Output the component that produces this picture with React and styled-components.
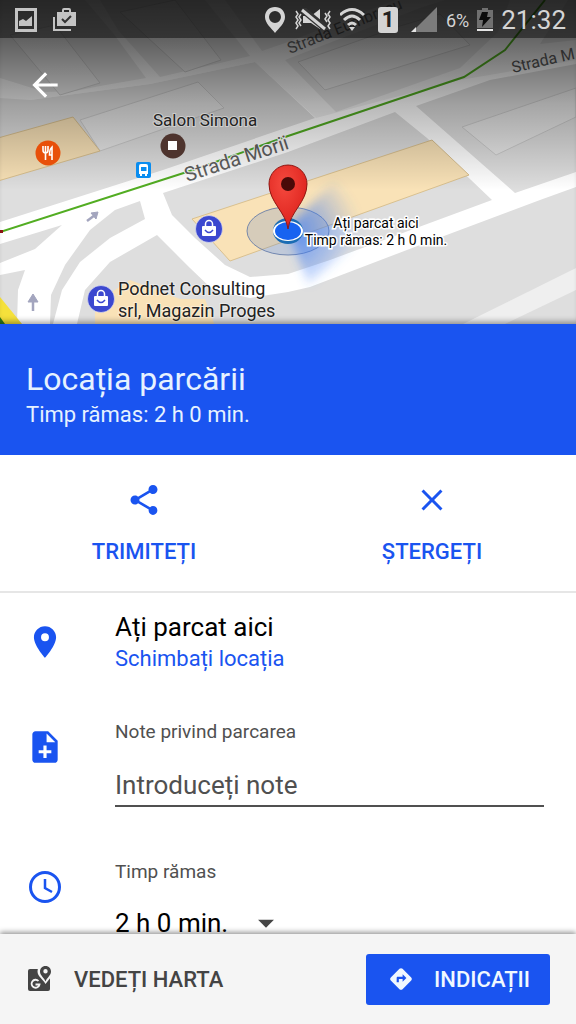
import React from "react";
import styled, { createGlobalStyle } from "styled-components";
import {
  MdArrowBack,
  MdShare,
  MdClose,
  MdPlace,
  MdNoteAdd,
  MdDirections,
  MdArrowDropDown,
} from "react-icons/md";

const BLUE = "#1a54f0";

const blocks = [
  "0,0 85,0 113,33 146,78 100,86 75,91 45,92 0,78",
  "100,0 205,0 250,56 160,77 118,30",
  "225,0 395,0 288,42 262,51",
  "285,60 420,8 445,0 510,0 498,32 460,68 336,112",
  "0,98 30,100 150,84 255,62 315,118 163,170 0,222",
  "416,106 490,80 576,64 576,172 515,193",
  "540,44 568,0 576,0 576,40",
  "163,193 288,152 395,112 427,138 492,200 400,234 330,260 288,274 250,277 225,265 195,238 172,215",
  "0,244 62,225 35,249 0,263",
  "0,275 25,270 18,290 17,324 0,324",
  "140,201 145,219 110,238 80,262 62,290 53,324 50,324 51,295 65,265 90,230 115,210",
  "157,235 190,268 213,290 250,298 288,292 310,287 420,245 540,200 576,187 576,324 77,324 85,290 110,262",
];

const buildings = [
  "10,35 55,25 100,83 60,95",
  "120,12 175,0 221,60 185,72",
  "298,62 400,26 440,14 470,45 325,90",
  "462,127 576,88 576,117 496,155",
  "80,120 198,82 224,108 100,151",
];

const MapDrawing = () => (
  <MapSvg viewBox="0 0 576 324" preserveAspectRatio="xMidYMax slice" aria-hidden="true">
    <defs>
      <radialGradient id="beam" gradientUnits="userSpaceOnUse" cx="288" cy="232" r="72">
        <stop offset="0" stopColor="#3f7df5" stopOpacity="0.8" />
        <stop offset="1" stopColor="#3f7df5" stopOpacity="0" />
      </radialGradient>
      <filter id="soft">
        <feGaussianBlur stdDeviation="5" />
      </filter>
      <linearGradient id="scrim" x1="0" y1="0" x2="0" y2="1">
        <stop offset="0" stopColor="#000" stopOpacity="0.68" />
        <stop offset="0.2" stopColor="#000" stopOpacity="0.58" />
        <stop offset="0.55" stopColor="#000" stopOpacity="0.28" />
        <stop offset="1" stopColor="#000" stopOpacity="0" />
      </linearGradient>
      <radialGradient id="pin" cx="0.4" cy="0.3" r="0.8">
        <stop offset="0" stopColor="#f5493e" />
        <stop offset="1" stopColor="#d91c17" />
      </radialGradient>
    </defs>
    <rect width="576" height="324" fill="#fff" />
    <path d="M0 0H576V60L460 80L316 118L255 62L150 84L30 100H0Z" fill="#f0f0f0" />
    {blocks.map((p) => (
      <polygon key={p} points={p} fill="#dedede" />
    ))}
    {buildings.map((p) => (
      <polygon key={p} points={p} fill="#e6e6e6" stroke="#cacaca" />
    ))}
    <polygon points="463,324 576,268 576,290 505,324" fill="#efefef" />
    <g fill="#f9e2b7" stroke="#d9c08f">
      <polygon points="-2,138 73,117 100,151 -2,181" />
      <polygon points="192,219 432,140 469,175 230,261" />
      <polygon points="95,326 95,303 130,280 180,299 205,299 215,326" stroke="none" />
    </g>
    <path d="M0 297L22 324H0Z" fill="#f5e13b" />
    <path d="M0 317L5 324H0Z" fill="#2f7d1c" />
    <path d="M0 232L193 170L288 136L464 77L505 50L545 0" fill="none" stroke="#52ad22" strokeWidth="2" />
    <rect y="230" width="3" height="3" fill="#8e1515" />
    <g fill="#a3a5be" stroke="#a3a5be" strokeWidth="2.5">
      <path d="M87 221L95 215" />
      <path d="M91 213L98 212L96 219Z" strokeWidth="1" />
      <path d="M33 311V300" />
      <path d="M28 302L33 294L38 302Z" strokeWidth="1" />
    </g>
    <text
      transform="translate(187 182) rotate(-18)"
      fontSize="20"
      fill="#606060"
      stroke="#fff"
      strokeWidth="2"
      paintOrder="stroke"
    >
      Strada Morii
    </text>
    <rect width="576" height="190" fill="url(#scrim)" />
    <g fontSize="16" fill="#2e2e2e">
      <text transform="translate(290 54) rotate(-22)">Strada Eumbracu</text>
      <text transform="translate(513 73) rotate(-13)">Strada M</text>
    </g>

    <circle cx="48" cy="153" r="12.5" fill="#e8500a" />
    <path
      d="M43 146v4q0 3 2.5 3t2.500-3v-4M45.500 146v14M52 160v-13q-2.500 2-2.500 8H52"
      fill="none"
      stroke="#fff"
      strokeWidth="1.600"
    />
    <circle cx="173" cy="146" r="12.5" fill="#4e342e" />
    <rect x="168" y="141" width="9" height="9" fill="#fff" />
    <rect x="136" y="162" width="15" height="16" rx="2" fill="#0a8df0" />
    <path d="M139 166q0-2 2-2h5q2 0 2 2v8h-1v2h-2v-2h-3v2h-2v-2h-1z" fill="#fff" />
    <path d="M141 167h5.500v4H141z" fill="#0a8df0" />
    {[
      [209, 229],
      [101, 299],
    ].map(([x, y]) => (
      <g key={x} transform={`translate(${x} ${y})`}>
        <circle r="13.5" fill="#3c48cf" stroke="#fff" strokeOpacity="0.5" />
        <rect x="-7" y="-3" width="14" height="10" rx="1" fill="#fff" />
        <path d="M-3.500-3v-2a3.500 3.500 0 0 1 7 0v2" fill="none" stroke="#fff" strokeWidth="1.500" />
        <path d="M-4 1q4 5 8 0" fill="none" stroke="#3c48cf" strokeWidth="1.500" />
      </g>
    ))}

    <ellipse cx="288" cy="231" rx="41" ry="24" fill="#4b78c8" fillOpacity="0.2" stroke="#5a74a5" strokeWidth="0.8" />
    <path d="M288 228L335 180L372 230L308 285Z" fill="url(#beam)" filter="url(#soft)" />
    <ellipse cx="288" cy="231" rx="15" ry="13" fill="#1a6cb4" />
    <ellipse cx="288" cy="231" rx="15" ry="10" fill="#fff" />
    <ellipse cx="288" cy="231" rx="13" ry="9" fill="#1763f0" />
    <path
      d="M288 229C286 212 269 202 269 184a19 19 0 0 1 38 0C307 202 290 212 288 229Z"
      fill="url(#pin)"
      stroke="#8f1712"
    />
    <circle cx="288" cy="184" r="7" fill="#4a0a08" />

    <g fontSize="17" fill="#222" stroke="#fff" strokeOpacity="0.4" strokeWidth="2" paintOrder="stroke">
      <text x="153" y="126">Salon Simona</text>
      <text x="118" y="295" fontSize="18">Podnet Consulting</text>
      <text x="118" y="317" fontSize="18">srl, Magazin Proges</text>
    </g>
    <g fontSize="14" fill="#000" stroke="#fff" strokeWidth="3" paintOrder="stroke" textAnchor="middle">
      <text x="376" y="228">Ați parcat aici</text>
      <text x="376" y="245">Timp rămas: 2 h 0 min.</text>
    </g>
  </MapSvg>
);

const StatusIcons = () => (
  <StatusGroup>
    <svg width="22" height="28" viewBox="0 0 22 28">
      <path
        d="M11 1C5 1 1 5 1 11c0 6 6 11 10 16 4-5 10-10 10-16C21 5 17 1 11 1zm0 4a6 6 0 1 1 0 12 6 6 0 0 1 0-12z"
        fill="#d4d4d4"
        fillRule="evenodd"
      />
    </svg>
    <svg width="38" height="24" viewBox="0 0 38 24">
      <path d="M9 8h8l9-7v20l-9-6H9z" fill="#d4d4d4" />
      <path d="M8 1L32 21" stroke="#333" strokeWidth="7" />
      <path d="M8 2L31 21" stroke="#d4d4d4" strokeWidth="3" />
      <path
        d="M2 3l2 3-2 3 2 3-2 3 2 3-2 3M7 6l-2 3 2 3-2 3 2 3M36 3l-2 3 2 3-2 3 2 3-2 3 2 3M31 5l2 3-2 3 2 3"
        fill="none"
        stroke="#d4d4d4"
        strokeWidth="1.500"
      />
    </svg>
    <svg width="28" height="26" viewBox="0 0 28 26">
      <path d="M0 8q12-11 24 0M4 13q8-8 16 0M8 18q4-4 8 0" fill="none" stroke="#d4d4d4" strokeWidth="3" />
      <path d="M9 20h6l-3 4z" fill="#d4d4d4" />
    </svg>
    <SimBadge>1</SimBadge>
    <svg width="28" height="26" viewBox="0 0 28 26">
      <path d="M27 0V25H2z" fill="#7c7c7c" />
      <path d="M6 20V25H1z" fill="#e4e4e4" />
    </svg>
    <Battery>6%</Battery>
    <svg width="16" height="26" viewBox="0 0 16 26">
      <path d="M5 1h6v2h5v18H0V3h5z" fill="#707070" />
      <path d="M0 22h16v2H0z" fill="#e4e4e4" />
      <path d="M5 5h6l-1 5h4L5 20l1-7H2z" fill="#0c0c0c" />
    </svg>
    <Clock>21:32</Clock>
  </StatusGroup>
);

const NoticeIcons = () => (
  <StatusGroup>
    <svg width="22" height="24" viewBox="0 0 22 24">
      <path d="M0 0h22v24H0zM3 3v18h16V3z" fill="#c4c4c4" fillRule="evenodd" />
      <path d="M4 18v-5l4-2 3 2 6-5v10z" fill="#c4c4c4" />
    </svg>
    <NoticeGap />
    <svg width="24" height="24" viewBox="0 0 24 24">
      <path d="M1 9v13h17" fill="none" stroke="#c4c4c4" strokeWidth="2" />
      <path d="M4 4h5V2q0-2 2-2h5q2 0 2 2v2h5v14H4zM11 4h5V2h-5z" fill="#c4c4c4" fillRule="evenodd" />
      <path d="M9 11l3 3 6-6" fill="none" stroke="#333" strokeWidth="2" />
    </svg>
  </StatusGroup>
);

const ViewMapIcon = () => (
  <svg width="24" height="28" viewBox="0 0 24 28" aria-hidden="true">
    <path d="M2 4h20q0 0 0 0v20q0 2-2 2H2q-2 0-2-2V6q0-2 2-2z" fill="#444" />
    <path d="M17.500-1c-5 0-8 3-8 7.500 0 5 5 7 8 12.500l7-9V-1z" fill="#f5f5f5" />
    <path
      d="M17.500 1c-3.500 0-5.500 2.500-5.500 5.500 0 4 4 6 5.500 10 1.500-4 5.500-6 5.500-10C23 3.500 21 1 17.500 1zm0 3a2.200 2.200 0 1 1 0 4.400 2.200 2.200 0 0 1 0-4.400z"
      fill="#444"
      fillRule="evenodd"
    />
    <path d="M10.500 16a4 4 0 1 0 1 3.500H7.500" fill="none" stroke="#f5f5f5" strokeWidth="1.800" />
  </svg>
);

const ClockIcon = () => (
  <svg width="34" height="34" viewBox="0 0 34 34" aria-hidden="true">
    <circle cx="17" cy="17" r="14.5" fill="none" stroke={BLUE} strokeWidth="3" />
    <path d="M17 9v9l7 4" fill="none" stroke={BLUE} strokeWidth="2.5" />
  </svg>
);

const App = () => {
  return (
    <Screen>
      <GlobalStyle />
      <MapArea>
        <MapDrawing />
        <StatusBar>
          <NoticeIcons />
          <StatusIcons />
        </StatusBar>
        <BackButton type="button" aria-label="Înapoi">
          <MdArrowBack size={38} />
        </BackButton>
      </MapArea>

      <Header>
        <Title>Locația parcării</Title>
        <Subtitle>Timp rămas: 2 h 0 min.</Subtitle>
      </Header>

      <Actions>
        <Action type="button">
          <MdShare size={36} />
          TRIMITEȚI
        </Action>
        <Action type="button">
          <MdClose size={36} />
          ȘTERGEȚI
        </Action>
      </Actions>

      <Details>
        <Row>
          <RowIcon $top={12}>
            <MdPlace size={38} />
          </RowIcon>
          <RowBody>
            <PlaceName>Ați parcat aici</PlaceName>
            <ChangeLink href="#locatie">Schimbați locația</ChangeLink>
          </RowBody>
        </Row>
        <Row>
          <RowIcon $top={10}>
            <MdNoteAdd size={38} />
          </RowIcon>
          <RowBody>
            <Label htmlFor="note">Note privind parcarea</Label>
            <NoteInput id="note" placeholder="Introduceți note" />
          </RowBody>
        </Row>
        <Row>
          <RowIcon $top={12}>
            <ClockIcon />
          </RowIcon>
          <RowBody>
            <Label htmlFor="timp">Timp rămas</Label>
            <SelectWrap>
              <TimeSelect id="timp" defaultValue="120">
                <option value="120">2 h 0 min.</option>
              </TimeSelect>
              <MdArrowDropDown size={38} />
            </SelectWrap>
          </RowBody>
        </Row>
      </Details>

      <BottomBar>
        <ViewMap type="button">
          <ViewMapIcon />
          VEDEȚI HARTA
        </ViewMap>
        <Directions type="button">
          <MdDirections size={26} />
          INDICAȚII
        </Directions>
      </BottomBar>
    </Screen>
  );
};

const GlobalStyle = createGlobalStyle`
  * {
    box-sizing: border-box;
  }
  body {
    margin: 0;
    font-family: Roboto, "Liberation Sans", sans-serif;
    background: #fff;
  }
  button, input, select {
    font-family: inherit;
    border: none;
    background: none;
    padding: 0;
    margin: 0;
  }
`;

const Screen = styled.div`
  display: flex;
  flex-direction: column;
  height: 100vh;
`;

const MapArea = styled.div`
  position: relative;
  flex: none;
  height: 324px;
  box-shadow: inset 0 -6px 6px -4px rgba(0, 0, 0, 0.4);
`;

const MapSvg = styled.svg`
  position: absolute;
  inset: 0;
  z-index: -1;
  width: 100%;
  height: 100%;
`;

const StatusBar = styled.div`
  display: flex;
  justify-content: space-between;
  align-items: center;
  height: 38px;
  padding: 2px 10px 0 15px;
  background: rgba(0, 0, 0, 0.45);
`;

const StatusGroup = styled.div`
  display: flex;
  align-items: center;
  gap: 8px;
  color: #d4d4d4;

  svg {
    flex: none;
  }
`;

const NoticeGap = styled.span`
  width: 0;
`;

const SimBadge = styled.span`
  width: 20px;
  height: 26px;
  margin: 0 4px 0 2px;
  border-radius: 3px;
  background: #d4d4d4;
  color: #222;
  font-size: 22px;
  font-weight: 700;
  line-height: 26px;
  text-align: center;
`;

const Battery = styled.span`
  font-size: 18px;
`;

const Clock = styled.span`
  font-size: 26px;
  line-height: 32px;
`;

const BackButton = styled.button`
  display: flex;
  margin: 28px 0 0 26px;
  color: #fff;
`;

const Header = styled.header`
  flex: none;
  padding: 35px 26px 25px;
  background: ${BLUE};
  color: #e6f2ff;
`;

const Title = styled.h1`
  margin: 0;
  font-size: 32px;
  font-weight: 400;
  line-height: 40px;
`;

const Subtitle = styled.p`
  margin: 0;
  font-size: 22px;
  line-height: 31px;
`;

const Actions = styled.div`
  display: grid;
  grid-template-columns: 1fr 1fr;
  flex: none;
  border-bottom: 2px solid #e6e6e6;
`;

const Action = styled.button`
  display: flex;
  flex-direction: column;
  align-items: center;
  gap: 20px;
  padding: 27px 0 25px;
  color: ${BLUE};
  font-size: 22px;
  font-weight: 500;
  line-height: 28px;
`;

const Details = styled.main`
  display: flex;
  flex-direction: column;
  flex: 1;
  gap: 43px;
  min-height: 0;
  padding: 18px 32px 0 26px;
  overflow-y: auto;
  scrollbar-width: none;
`;

const Row = styled.section`
  display: flex;
  flex: none;
`;

const RowIcon = styled.div`
  display: flex;
  justify-content: center;
  width: 38px;
  height: 38px;
  margin: ${({ $top }) => $top}px 51px 0 0;
  color: ${BLUE};
`;

const RowBody = styled.div`
  display: flex;
  flex-direction: column;
  align-items: flex-start;
  flex: 1;
`;

const PlaceName = styled.span`
  font-size: 26px;
  line-height: 32px;
`;

const ChangeLink = styled.a`
  color: ${BLUE};
  font-size: 22px;
  line-height: 32px;
  text-decoration: none;
`;

const Label = styled.label`
  color: #505050;
  font-size: 19px;
  line-height: 28px;
`;

const NoteInput = styled.input`
  width: 100%;
  height: 42px;
  margin: 19px 0 8px;
  border-bottom: 2px solid #505050;
  font-size: 26px;
  outline: none;

  &::placeholder {
    color: #505050;
    opacity: 1;
  }
`;

const SelectWrap = styled.div`
  display: flex;
  align-items: center;
  gap: 18px;
  margin-top: 18px;
  color: #444;
`;

const TimeSelect = styled.select`
  appearance: none;
  color: #000;
  font-size: 26px;
  line-height: 36px;
`;

const BottomBar = styled.footer`
  position: relative;
  display: flex;
  justify-content: space-between;
  align-items: center;
  flex: none;
  height: 90px;
  padding: 0 26px 0 28px;
  background: #f5f5f5;
  box-shadow: 0 -2px 5px rgba(0, 0, 0, 0.4);
`;

const ViewMap = styled.button`
  display: flex;
  align-items: center;
  gap: 22px;
  color: #444;
  font-size: 22px;
  font-weight: 500;
`;

const Directions = styled.button`
  display: flex;
  align-items: center;
  gap: 20px;
  height: 51px;
  padding: 0 20px 0 22px;
  border-radius: 3px;
  background: ${BLUE};
  color: #f0f8ff;
  font-size: 22px;
  font-weight: 500;
`;

export default App;
